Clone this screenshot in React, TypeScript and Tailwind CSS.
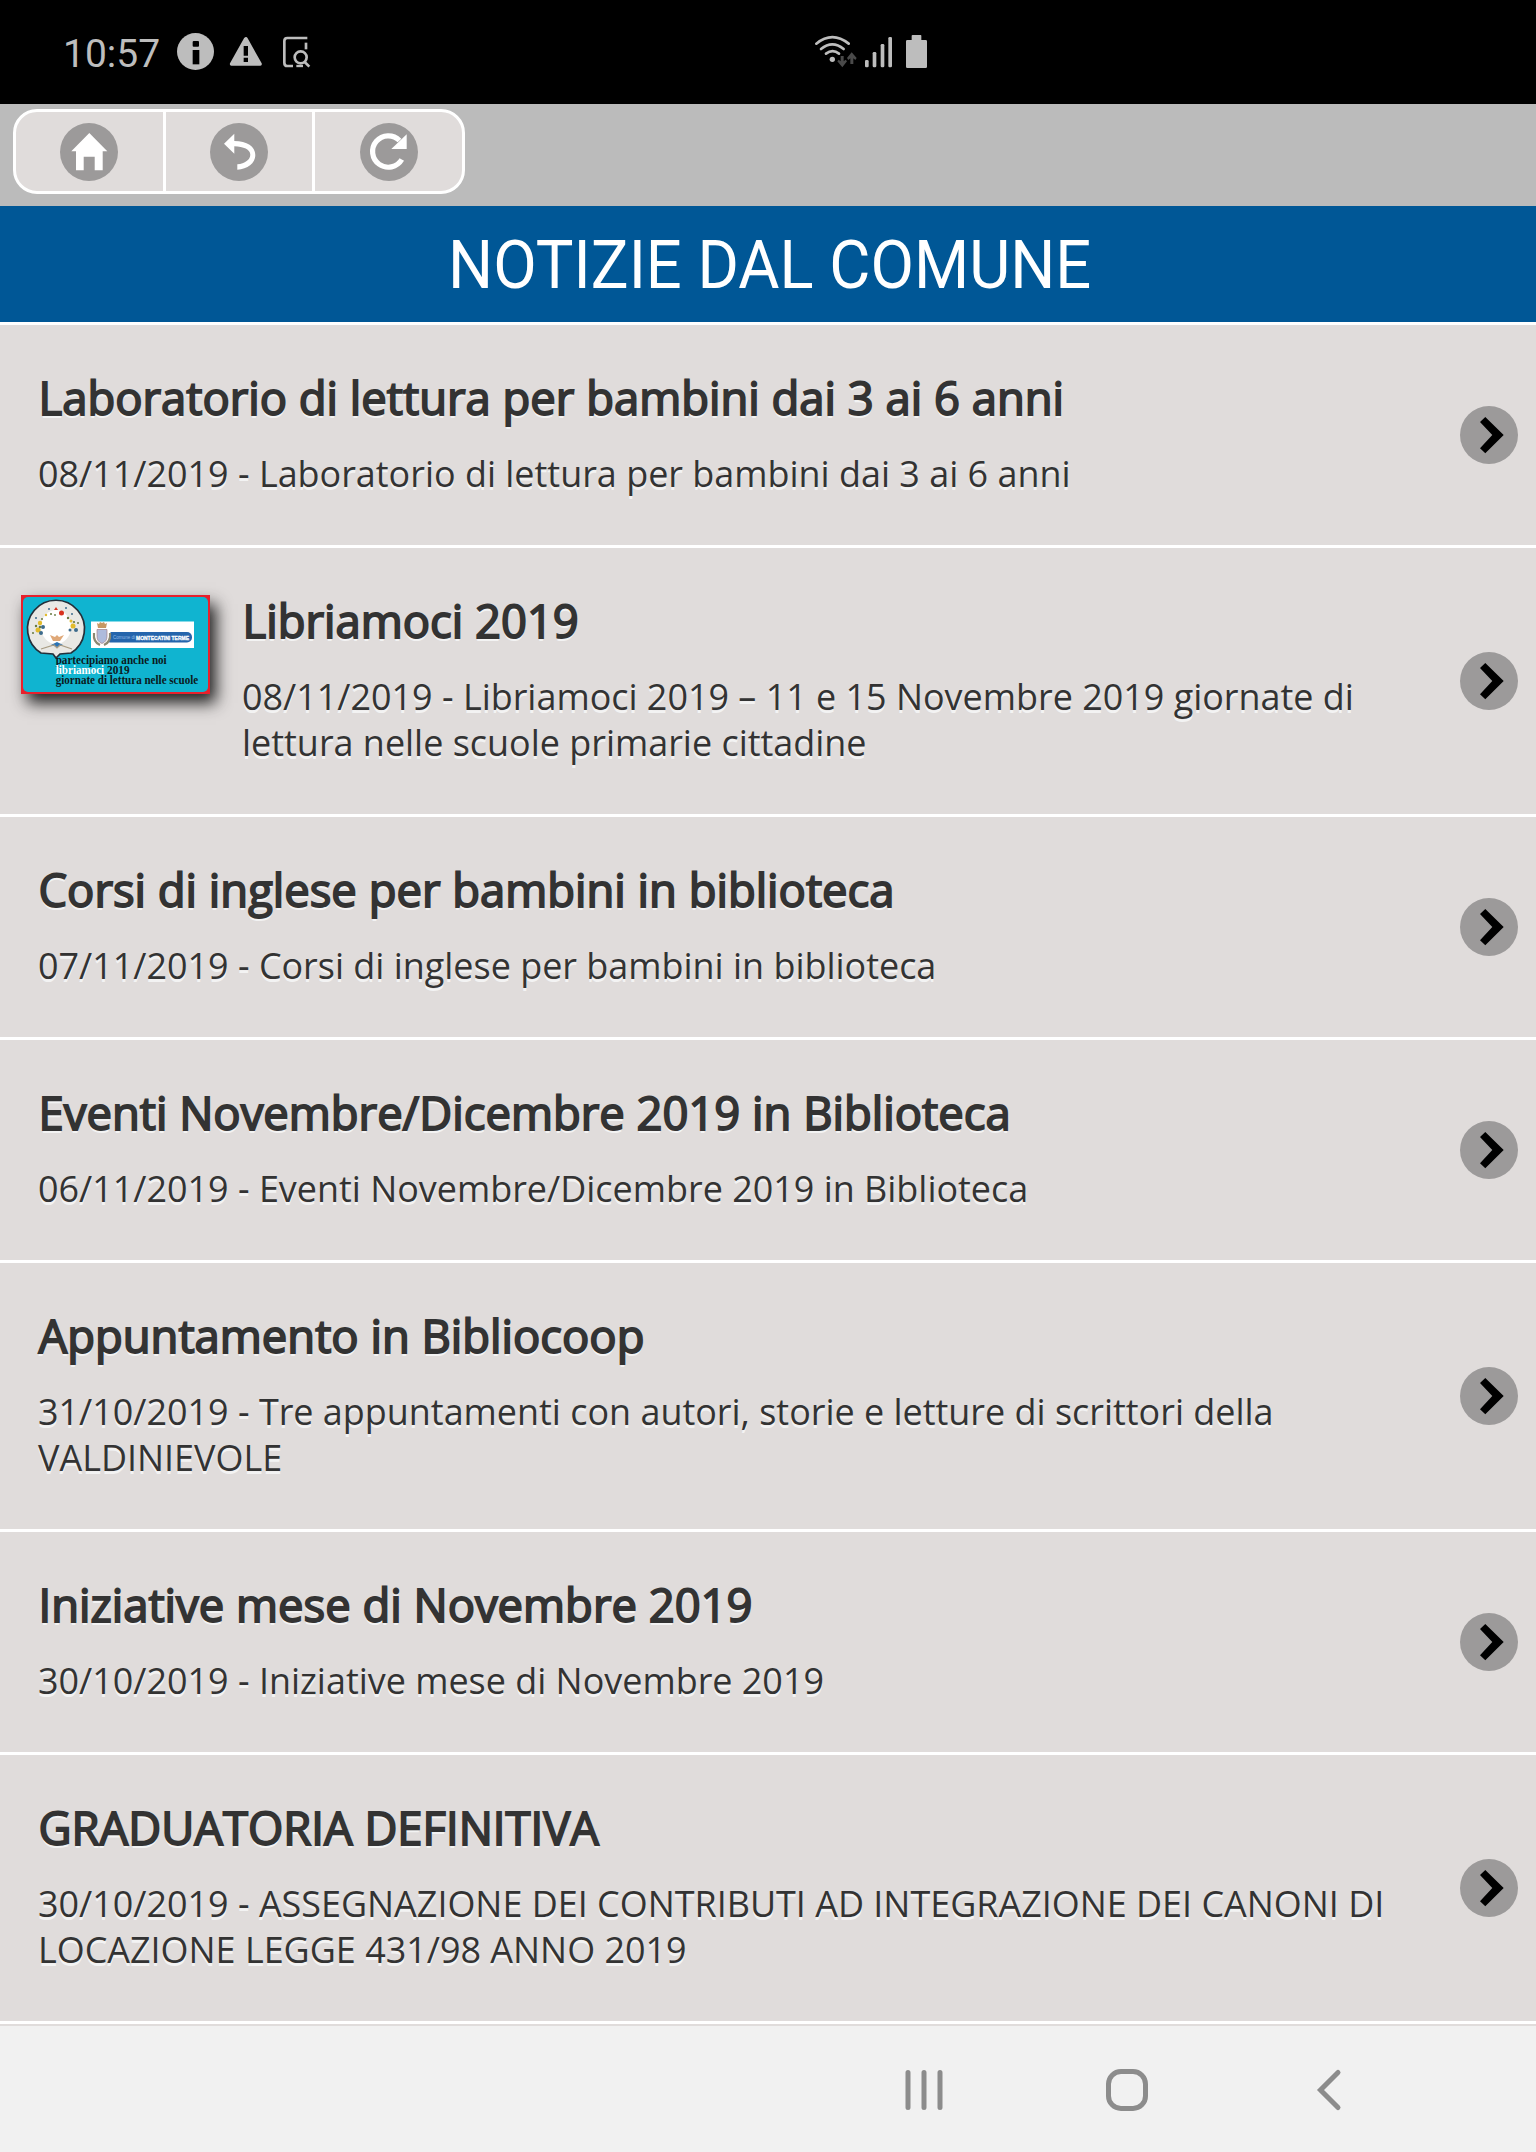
import React from 'react';

const news = [
  {
    title: 'Laboratorio di lettura per bambini dai 3 ai 6 anni',
    text: '08/11/2019 - Laboratorio di lettura per bambini dai 3 ai 6 anni',
  },
  {
    title: 'Libriamoci 2019',
    text: '08/11/2019 - Libriamoci 2019 – 11 e 15 Novembre 2019 giornate di lettura nelle scuole primarie cittadine',
    thumb: true,
  },
  {
    title: 'Corsi di inglese per bambini in biblioteca',
    text: '07/11/2019 - Corsi di inglese per bambini in biblioteca',
  },
  {
    title: 'Eventi Novembre/Dicembre 2019 in Biblioteca',
    text: '06/11/2019 - Eventi Novembre/Dicembre 2019 in Biblioteca',
  },
  {
    title: 'Appuntamento in Bibliocoop',
    text: '31/10/2019 - Tre appuntamenti con autori, storie e letture di scrittori della VALDINIEVOLE',
  },
  {
    title: 'Iniziative mese di Novembre 2019',
    text: '30/10/2019 - Iniziative mese di Novembre 2019',
  },
  {
    title: 'GRADUATORIA DEFINITIVA',
    text: '30/10/2019 - ASSEGNAZIONE DEI CONTRIBUTI AD INTEGRAZIONE DEI CANONI DI LOCAZIONE LEGGE 431/98 ANNO 2019',
  },
];

function StatusBar() {
  return (
    <div className="h-[104px] bg-black flex items-start text-[#bdbdbd] fill-[#bdbdbd] shrink-0">
      <span className="ml-[63px] mt-[31px] w-[114px] text-[39px] leading-[47px] whitespace-nowrap font-['Roboto',sans-serif]">10:57</span>
      <svg className="mt-[33px] w-[37px] h-[37px]" viewBox="0 0 111 111">
        <circle cx="55.5" cy="55.5" r="55.5" />
        <rect x="47" y="24" width="19" height="17" rx="3" fill="#000" />
        <path d="M47 51h20v43H47z" fill="#000" />
      </svg>
      <svg className="ml-[15px] mt-[36px] w-[34px] h-[31px]" viewBox="0 0 102 93">
        <path d="M51 3q3 0 5 4l42 75q2 7-4 7H7q-6 0-4-7L45 7q3-4 6-4z" />
        <path d="M44 30h13v29H44zM44 65h13v13H44z" fill="#000" />
      </svg>
      <svg className="ml-[19px] mt-[35px] w-[30px] h-[34px] fill-none stroke-[#bdbdbd]" viewBox="846 105 90 102">
        <path d="M922 114H862q-9 0-9 9v65q0 10 9 10h17" strokeWidth="8" />
        <path d="M918 128v20" strokeWidth="8" />
        <circle cx="902" cy="172" r="18" strokeWidth="8" />
        <path d="M914 186l14 14" strokeWidth="8" />
        <path d="M889 198h20" strokeWidth="7" />
      </svg>
      <svg className="ml-[502px] mt-[33px] w-[44px] h-[36px]" viewBox="102 99 132 108">
        <g fill="none" stroke="#bdbdbd" strokeWidth="8" strokeLinecap="round">
          <path d="M109 131q48-39 97 0" />
          <path d="M123 147q34-28 68 0" />
          <path d="M138 161q20-15 39 0" />
        </g>
        <circle cx="157" cy="178" r="8" />
        <path d="M182 168h9v16l6-5 4 5-14 18-15-18 4-5 6 5zM211 192h9v-17l6 5 4-6-15-17-14 17 4 6 6-5z" fill="#4a4a4a" />
      </svg>
      <svg className="ml-[7px] mt-[36px] w-[28px] h-[32px]" viewBox="255 108 84 96">
        <rect x="255" y="180" width="11" height="22" rx="4" />
        <rect x="278" y="156" width="11" height="46" rx="4" />
        <rect x="302" y="132" width="11" height="70" rx="4" />
        <rect x="325" y="111" width="11" height="91" rx="4" />
      </svg>
      <svg className="ml-[13px] mt-[35px] w-[21px] h-[33px]" viewBox="378 105 63 99">
        <path d="M398 105h24q2 0 2 2v13h13q4 0 4 4v76q0 4-4 4h-55q-4 0-4-4v-76q0-4 4-4h13v-13q0-2 3-2z" />
      </svg>
    </div>
  );
}

function Toolbar() {
  return (
    <div className="h-[102px] bg-[#bbbbbb] pl-[13px] pt-[5px] shrink-0">
      <div className="w-[452px] h-[85px] rounded-[24px] border-[3px] border-white bg-[#e0dcdb] flex divide-x-[3px] divide-white overflow-hidden">
        <button className="flex-1 flex items-center justify-center">
          <svg className="w-[58px] h-[58px]" viewBox="0 0 58 58">
            <circle cx="29" cy="29" r="29" fill="#9c9a9a" />
            <path d="M29.3 10l18 18.3h-4.6v19h-8V33.7h-11v13.6H16v-19h-4.7z" fill="#fff" />
          </svg>
        </button>
        <button className="flex-1 flex items-center justify-center">
          <svg className="w-[58px] h-[58px]" viewBox="0 0 58 58">
            <circle cx="29" cy="29" r="29" fill="#9c9a9a" />
            <path d="M14 20.7l10.3-10V18C37 18 45.3 23.500 45.3 32S37.500 46 27.300 46.700v-5.400C35 40.500 40.300 36.500 40.300 31.700 40.300 26.500 33.500 23.500 24.300 23.300v7.400z" fill="#fff" />
          </svg>
        </button>
        <button className="flex-1 flex items-center justify-center">
          <svg className="w-[58px] h-[58px]" viewBox="0 0 58 58">
            <circle cx="29" cy="29" r="29" fill="#9c9a9a" />
            <path d="M41.800 36.500A15.700 15.700 0 1 1 39.500 17.500" fill="none" stroke="#fff" strokeWidth="5.200" />
            <path d="M46.700 11.300V26H31.300z" fill="#fff" />
          </svg>
        </button>
      </div>
    </div>
  );
}

function Thumb() {
  return (
    <svg className="ml-[21px] mt-[47px] w-[189px] h-[99px] shrink-0 shadow-[6px_9px_15px_#222] [text-shadow:none]" viewBox="0 0 189 99">
      <rect width="189" height="99" fill="#e8202c" />
      <rect x="2" y="2" width="185" height="95" rx="5" fill="#10b4d0" />
      <path d="M20 58A28.500 28.500 0 1 1 50 58l-11 1-4 4-3-4z" fill="#e9e8e4" stroke="#24303a" strokeWidth="1.700" />
      <ellipse cx="35" cy="32" rx="15" ry="17" fill="#fff" />
      <path d="M33 15l2-3 2 3zM38 18a2.500 2.500 0 1 0 5 0 2.500 2.500 0 1 0-5 0" fill="#d8321f" />
      <g fill="#e2bb2b">
        <circle cx="19" cy="28" r="2.200" />
        <circle cx="17" cy="35" r="2.500" />
        <circle cx="52" cy="31" r="2.500" />
        <circle cx="50" cy="26" r="1.500" />
        <circle cx="25" cy="20" r="1.200" />
      </g>
      <g fill="#3d6b8c">
        <circle cx="22" cy="32" r="2" />
        <circle cx="20" cy="38" r="2" />
        <circle cx="55" cy="35" r="2" />
        <circle cx="49" cy="35" r="1.500" />
        <circle cx="28" cy="14" r="1" />
        <circle cx="45" cy="13" r="1" />
        <circle cx="51" cy="19" r="1" />
        <circle cx="15" cy="23" r="1" />
      </g>
      <g fill="#66793f">
        <circle cx="15" cy="31" r="1.200" />
        <circle cx="21" cy="24" r="1" />
        <circle cx="47" cy="23" r="1.200" />
        <circle cx="57" cy="28" r="1" />
        <circle cx="12" cy="38" r="1" />
        <circle cx="30" cy="19" r="1" />
        <circle cx="19" cy="32" r="1.300" />
        <circle cx="53" cy="27" r="1.100" />
        <circle cx="34" cy="20" r=".9" />
      </g>
      <path d="M29 40l5 2 2-2 2 2 5-2-4 6h-7z" fill="#dfa878" />
      <path d="M30 50l6-3 6 3-6 2z" fill="#2b73b4" />
      <path d="M20 54l13-4 3 3 3-3 12 4" fill="none" stroke="#a99c83" strokeWidth="1.200" />
      <rect x="70" y="26.500" width="103" height="26.500" fill="#fff" />
      <rect x="84" y="37" width="87" height="10.500" rx="5" fill="#2565ac" />
      <path d="M72 38q0 11 9 12 9-1 9-12l-3-3H76z" fill="#fff" />
      <path d="M73 38q-1 9 6 12M89 38q1 9-6 12" fill="none" stroke="#8b8872" strokeWidth="2.200" />
      <path d="M76 34.500h10v7q0 5-5 7-5-2-5-7z" fill="#aebbdc" stroke="#a48186" strokeWidth=".7" />
      <path d="M76 28l2 1 1-2 2 1 2-1 1 2 2-1-1 5h-8z" fill="#c79863" />
      <text x="92" y="44.300" fontSize="5" textLength="22" lengthAdjust="spacingAndGlyphs" fill="#8fb8e4" fontFamily="Liberation Sans, sans-serif">Comune di</text>
      <text x="115" y="44.500" fontSize="5.500" fontWeight="bold" textLength="53" lengthAdjust="spacingAndGlyphs" fill="#fff" stroke="#fff" strokeWidth=".3" fontFamily="Liberation Sans, sans-serif">MONTECATINI TERME</text>
      <g fontFamily="Liberation Serif, serif" fontWeight="bold" fontSize="12" fill="#0b1a20">
        <text x="34.700" y="69" textLength="111" lengthAdjust="spacingAndGlyphs">partecipiamo anche noi</text>
        <text x="34.700" y="78.700" textLength="48.500" lengthAdjust="spacingAndGlyphs" fill="#fff">libriamoci</text>
        <text x="86" y="78.700" textLength="22.500" lengthAdjust="spacingAndGlyphs">2019</text>
        <text x="34.700" y="88.700" textLength="142.500" lengthAdjust="spacingAndGlyphs">giornate di lettura nelle scuole</text>
      </g>
    </svg>
  );
}

function NewsRow({ item }: { item: (typeof news)[number] }) {
  return (
    <li className="flex border-b-[3px] border-white text-[#333333] [text-shadow:0_3px_0_#f3f3f3]">
      {item.thumb && <Thumb />}
      <div className={`flex-1 pt-[41px] pb-[48px] ${item.thumb ? 'pl-[32px]' : 'pl-[38px]'}`}>
        <h2 className="pl-[0.5px] text-[45.4px] leading-[62px] whitespace-nowrap [-webkit-text-stroke:1.8px_#333]">{item.title}</h2>
        <p className="mt-[23px] text-[35.93px] leading-[46px]">{item.text}</p>
      </div>
      <div className="w-[126px] pr-[18px] shrink-0 flex items-center justify-end">
        <svg className="w-[58px] h-[58px]" viewBox="0 0 58 58">
          <circle cx="29" cy="29" r="29" fill="#9c9a9a" />
          <path d="M25.300 11l18.400 18-18.400 18.300-5.300-5L32.300 29 20 16z" />
        </svg>
      </div>
    </li>
  );
}

function NavBar() {
  return (
    <div className="h-[128px] border-t-2 border-[#e0dcdb] bg-[#f1f1f1] shrink-0 flex pt-[42px] fill-none stroke-[#8c8c8c]">
      <svg className="ml-[904px] w-[40px] h-[44px]" viewBox="0 0 40 44" strokeWidth="5" strokeLinecap="round">
        <path d="M4 4.500v35M20 4.500v35M36 4.500v35" />
      </svg>
      <svg className="ml-[161px] w-[44px] h-[44px]" viewBox="0 0 44 44" strokeWidth="5">
        <rect x="3.500" y="3.500" width="37" height="37" rx="12.500" />
      </svg>
      <svg className="ml-[166px] w-[28px] h-[44px]" viewBox="0 0 28 44" strokeWidth="5" strokeLinecap="round">
        <path d="M23 4.500L5.500 22 23 39.500" />
      </svg>
    </div>
  );
}

export default function App() {
  return (
    <div className="w-[1536px] h-[2152px] flex flex-col overflow-hidden bg-[#e0dcdb] font-['Open_Sans',sans-serif]">
      <StatusBar />
      <Toolbar />
      <header className="h-[119px] bg-[#005796] border-b-[3px] border-white shrink-0 flex items-center justify-center pt-[3px] pl-[3px]">
        <h1 className="text-[66px] leading-[80px] text-white whitespace-nowrap scale-x-[0.958] font-['Roboto',sans-serif]">NOTIZIE DAL COMUNE</h1>
      </header>
      <ul className="flex-1">
        {news.map((item) => (
          <NewsRow key={item.title} item={item} />
        ))}
      </ul>
      <NavBar />
    </div>
  );
}
